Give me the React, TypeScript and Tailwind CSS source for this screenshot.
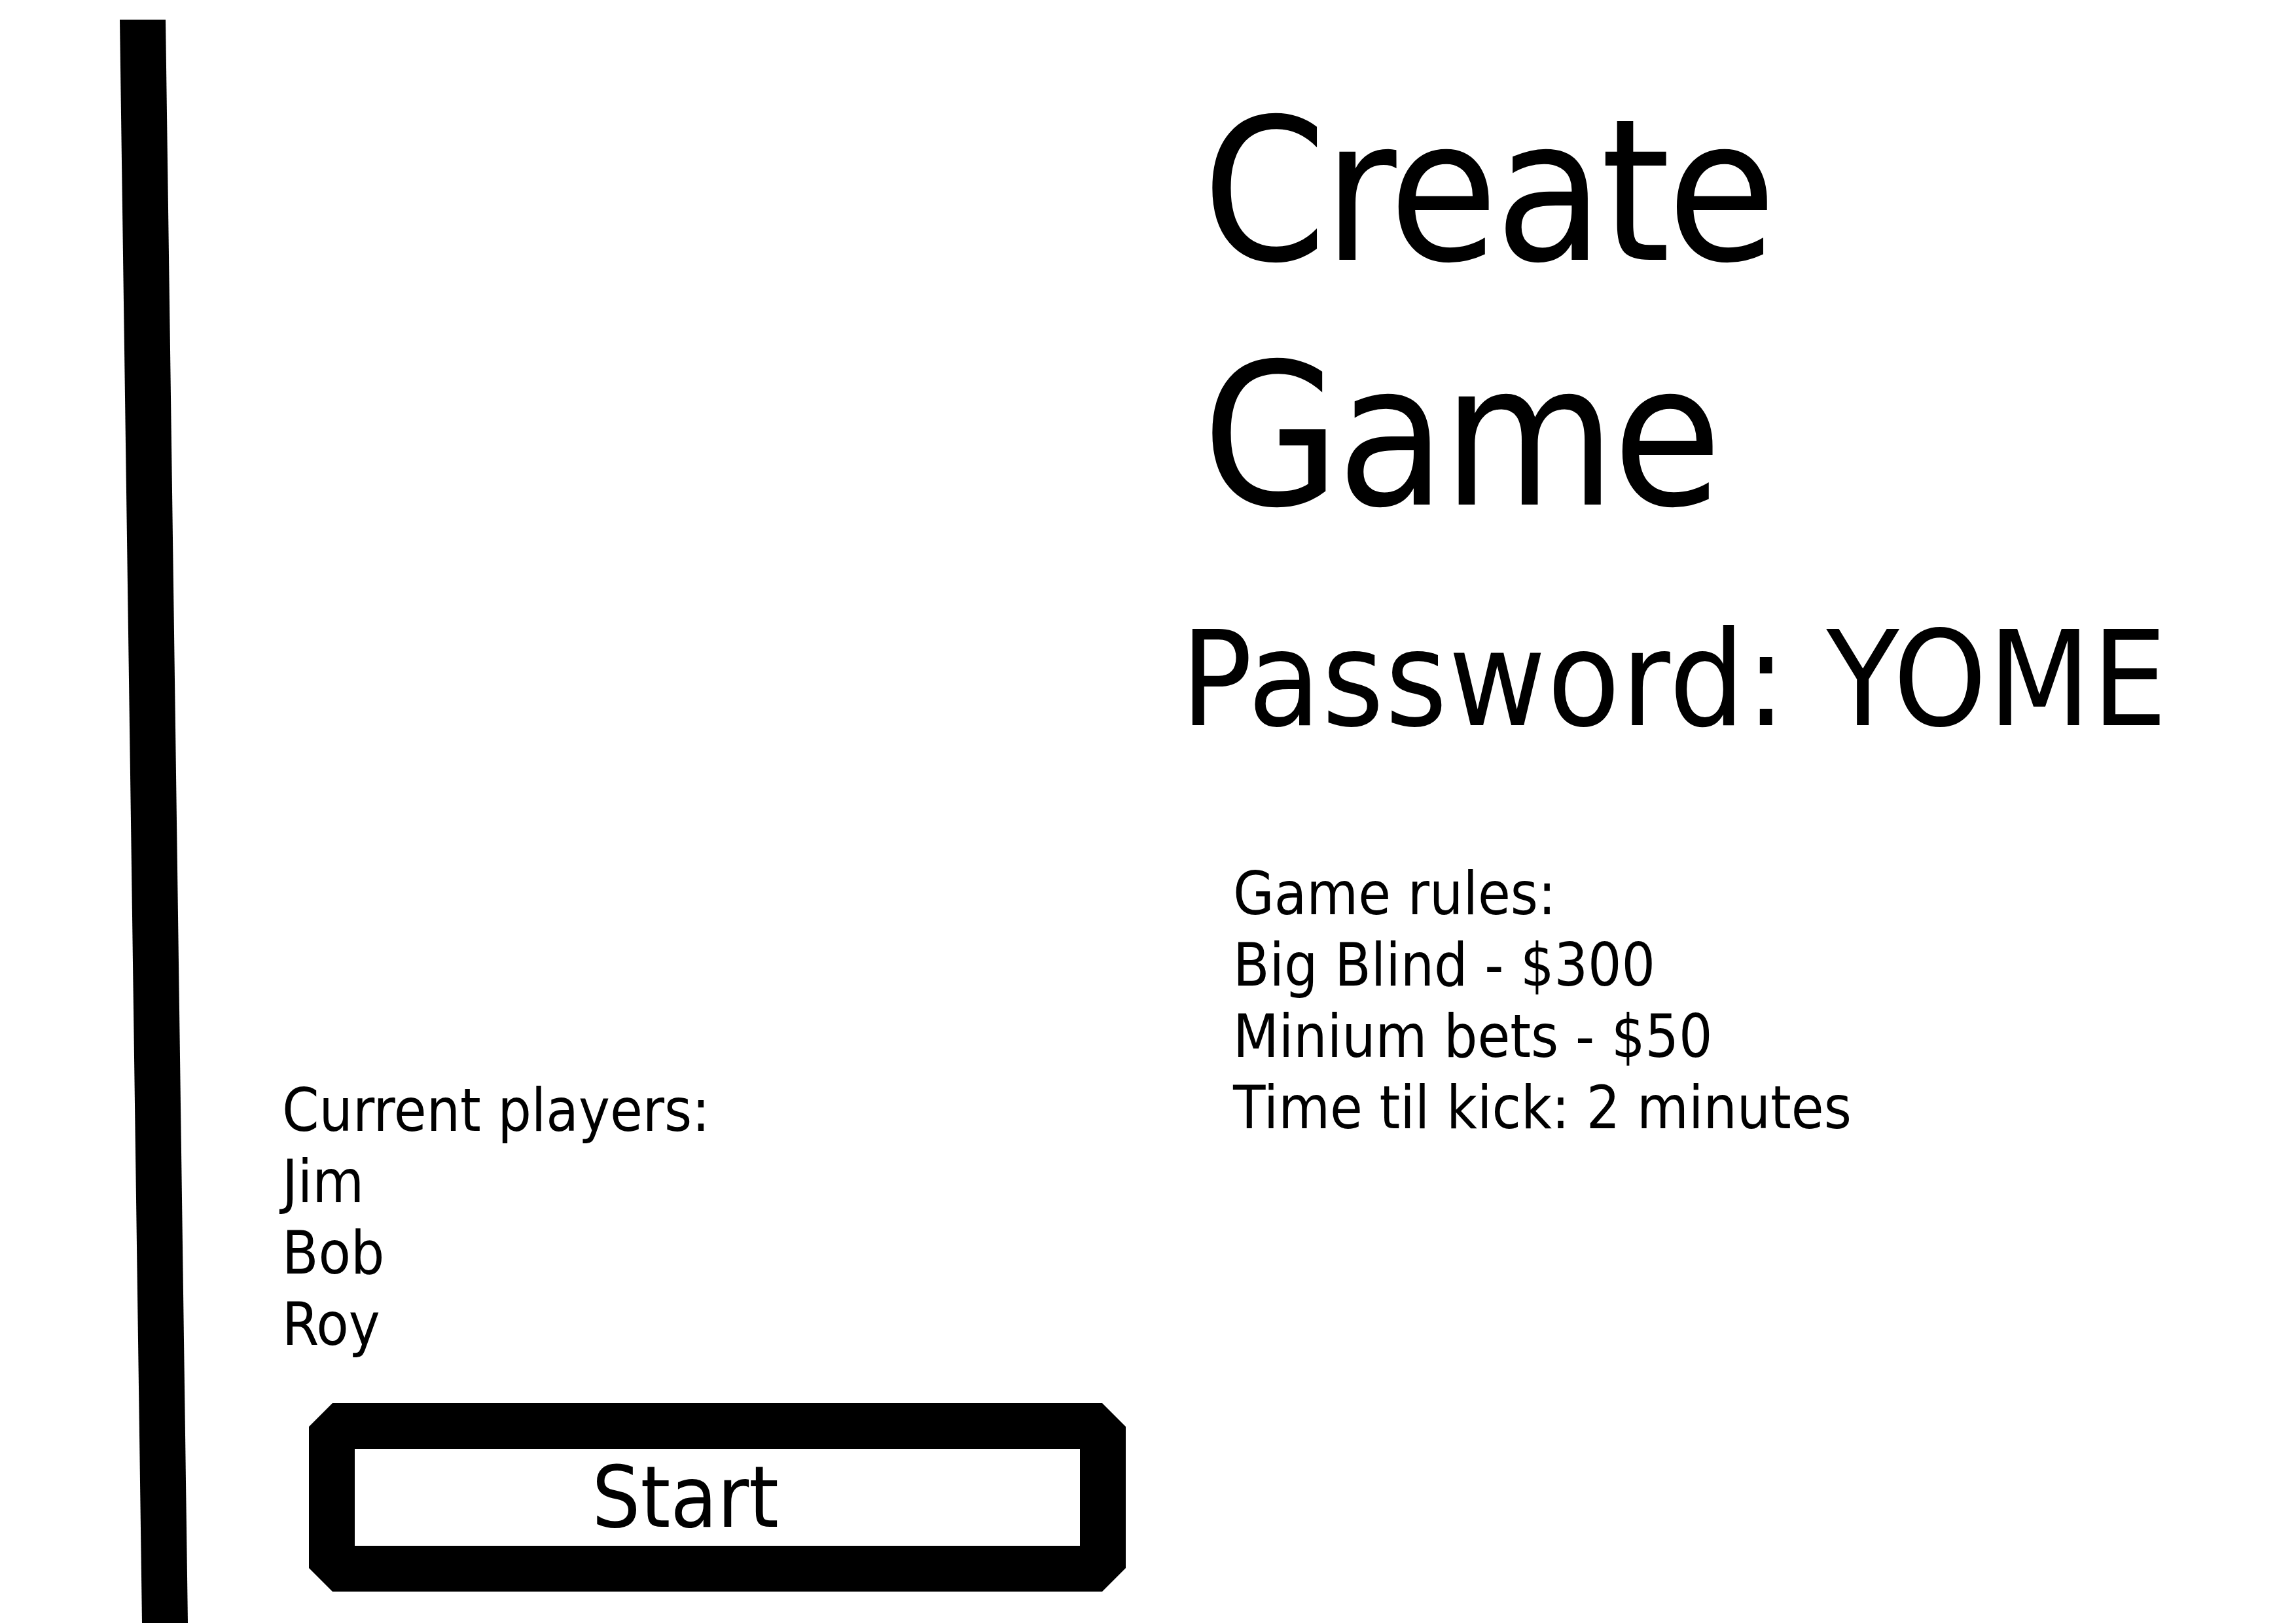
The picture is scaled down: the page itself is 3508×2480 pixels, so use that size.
const font = "font-['DejaVu_Sans_Condensed','DejaVu_Sans',sans-serif]";

const players = ['Jim', 'Bob', 'Roy'];
const rules = ['Big Blind - $300', 'Minium bets - $50', 'Time til kick: 2 minutes'];

export default function App() {
  return (
    <div className={`flex h-[2480px] w-[3508px] overflow-hidden bg-white text-black ${font}`}>
      {/* slanted divider */}
      <svg width="300" height="2480" viewBox="0 0 300 2480" className="shrink-0">
        <polygon points="183,30 253,30 287,2480 217,2480" fill="#000" />
      </svg>

      <div className="flex w-[1500px] shrink-0 flex-col">
        <div className="ml-[131px] mt-[1642px] text-[90px] leading-[109px]">
          <div>Current players:</div>
          {players.map((p) => (
            <div key={p}>{p}</div>
          ))}
        </div>
        <button className="ml-[172px] mt-[66px] h-[288px] w-[1248px] bg-black p-[70px] [clip-path:polygon(36px_0,calc(100%_-_36px)_0,100%_36px,100%_calc(100%_-_36px),calc(100%_-_36px)_100%,36px_100%,0_calc(100%_-_36px),0_36px)]">
          <div className="flex h-full w-full items-center justify-center bg-white pr-[98px] text-[130px] leading-none">
            Start
          </div>
        </button>
      </div>

      <div className="flex flex-col">
        <h1 className="ml-[37px] mt-[106px] text-[302px] font-normal leading-[374px] tracking-[-5px]">
          Create
          <br />
          Game
        </h1>
        <div className="ml-[4px] mt-[64px] text-[202px] leading-[240px] tracking-[2px]">Password: YOME</div>
        <div className="ml-[84px] mt-[153px] text-[90px] leading-[109px]">
          <div>Game rules:</div>
          {rules.map((r) => (
            <div key={r}>{r}</div>
          ))}
        </div>
      </div>
    </div>
  );
}
